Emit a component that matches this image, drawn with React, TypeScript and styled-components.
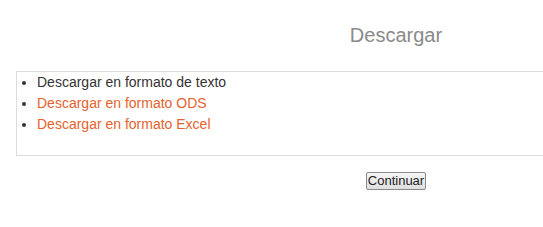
import React from "react";
import styled, { createGlobalStyle } from "styled-components";

const Global = createGlobalStyle`
  html, body { margin: 0; padding: 0; background: #fff; overflow: hidden; }
  body { font-family: "Liberation Sans", Arial, sans-serif; }
`;

const Page = styled.div`
  width: 760px;
  padding: 24px 0 0 16px;
`;

const Title = styled.h2`
  margin: 0 0 24px;
  font-size: 20px;
  line-height: 23px;
  font-weight: normal;
  color: #8a8a8a;
  text-align: center;
`;

const Box = styled.div`
  border: 1px solid #dcdcdc;
  padding: 0 0 21px;
  height: 62px;
`;

const List = styled.ul`
  margin: 0;
  padding: 0 0 0 20px;
  font-size: 14px;
  line-height: 21px;
  color: #333;
`;

const Item = styled.li`
  color: #333;
`;

const Label = styled.span<{ $link?: boolean }>`
  color: ${(p) => (p.$link ? "#e5622d" : "#333")};
  cursor: ${(p) => (p.$link ? "pointer" : "default")};
`;

const Actions = styled.div`
  display: flex;
  justify-content: center;
  padding-top: 16px;
`;

const Button = styled.button`
  font-family: "Liberation Sans", Arial, sans-serif;
  font-size: 13px;
  color: #222;
  padding: 1px 1px;
  border: 1px solid #8a8a8a;
  border-radius: 2px;
  background: linear-gradient(#f6f6f6, #dedede);
  line-height: 14px;
`;

export default function App() {
  return (
    <>
      <Global />
      <Page>
        <Title>Descargar</Title>
        <Box>
          <List>
            <Item><Label>Descargar en formato de texto</Label></Item>
            <Item><Label $link>Descargar en formato ODS</Label></Item>
            <Item><Label $link>Descargar en formato Excel</Label></Item>
          </List>
        </Box>
        <Actions>
          <Button>Continuar</Button>
        </Actions>
      </Page>
    </>
  );
}
